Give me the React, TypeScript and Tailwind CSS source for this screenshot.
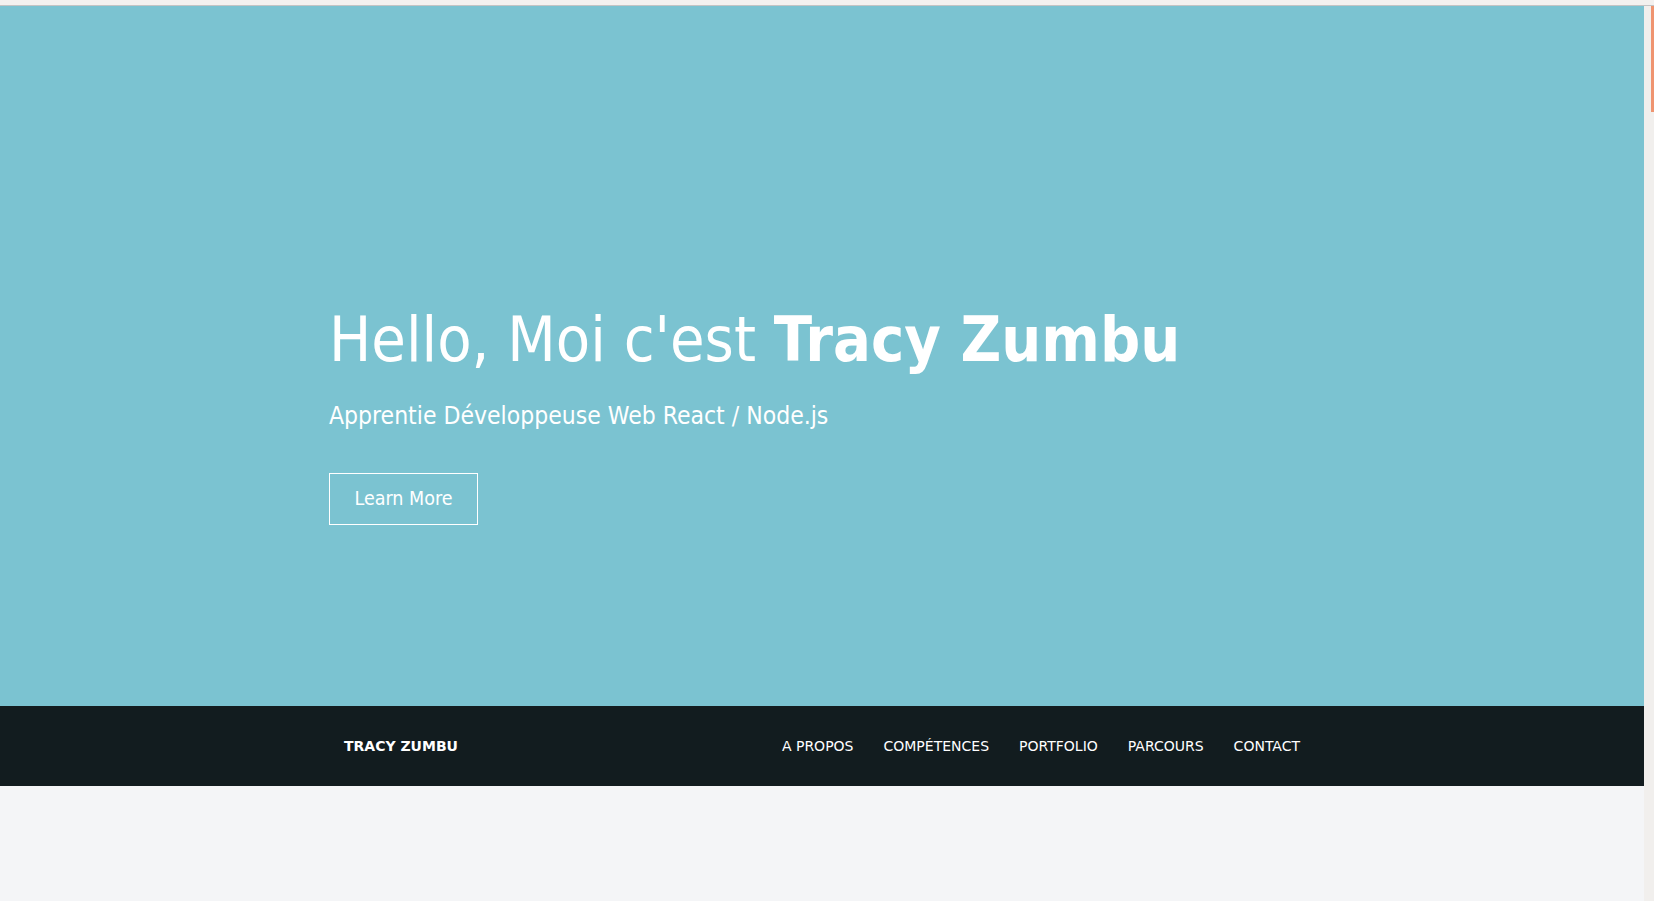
const links = ["A PROPOS", "COMPÉTENCES", "PORTFOLIO", "PARCOURS", "CONTACT"];

export default function App() {
  return (
    <div className="flex h-screen flex-col overflow-hidden bg-[#f4f5f7] font-['DejaVu_Sans',sans-serif]">
      {/* bande du haut */}
      <div className="h-[5px] shrink-0 bg-[#f3f1ef]" />
      <div className="h-px shrink-0 bg-[#c4c4c4]" />

      <div className="flex flex-1">
        <div className="flex flex-1 flex-col">
          {/* hero */}
          <section className="h-[700px] bg-[#7bc3d1] pt-[296px] text-white">
            <div className="mx-auto w-[986px] font-['DejaVu_Sans_Condensed','DejaVu_Sans',sans-serif]">
              <h1 className="text-[62.5px] leading-[1.2] font-normal">
                Hello, Moi c'est <span className="font-bold">Tracy Zumbu</span>
              </h1>
              <p className="mt-[21px] text-[24.5px] leading-[1.5]">
                Apprentie Développeuse Web React / Node.js
              </p>
              <button className="mt-[38px] flex h-[52px] w-[149px] items-center justify-center border border-white text-[19.5px] leading-[1.5] text-white">
                Learn More
              </button>
            </div>
          </section>

          {/* navbar */}
          <nav className="h-[80px] bg-[#121c1f] text-white">
            <div className="mx-auto flex h-full w-[986px] items-center justify-between">
              <a className="pl-[15px] text-[14px] font-bold">TRACY ZUMBU</a>
              <ul className="flex">
                {links.map((l) => (
                  <li key={l} className="px-[15px] text-[14px]">
                    {l}
                  </li>
                ))}
              </ul>
            </div>
          </nav>

          <div className="flex-1 bg-[#f4f5f7]" />
        </div>

        {/* barre de défilement */}
        <div className="flex w-[10px] shrink-0 justify-end bg-[#f1efed]">
          <div className="h-[106px] w-[3px] bg-[#ef9470]" />
        </div>
      </div>
    </div>
  );
}
